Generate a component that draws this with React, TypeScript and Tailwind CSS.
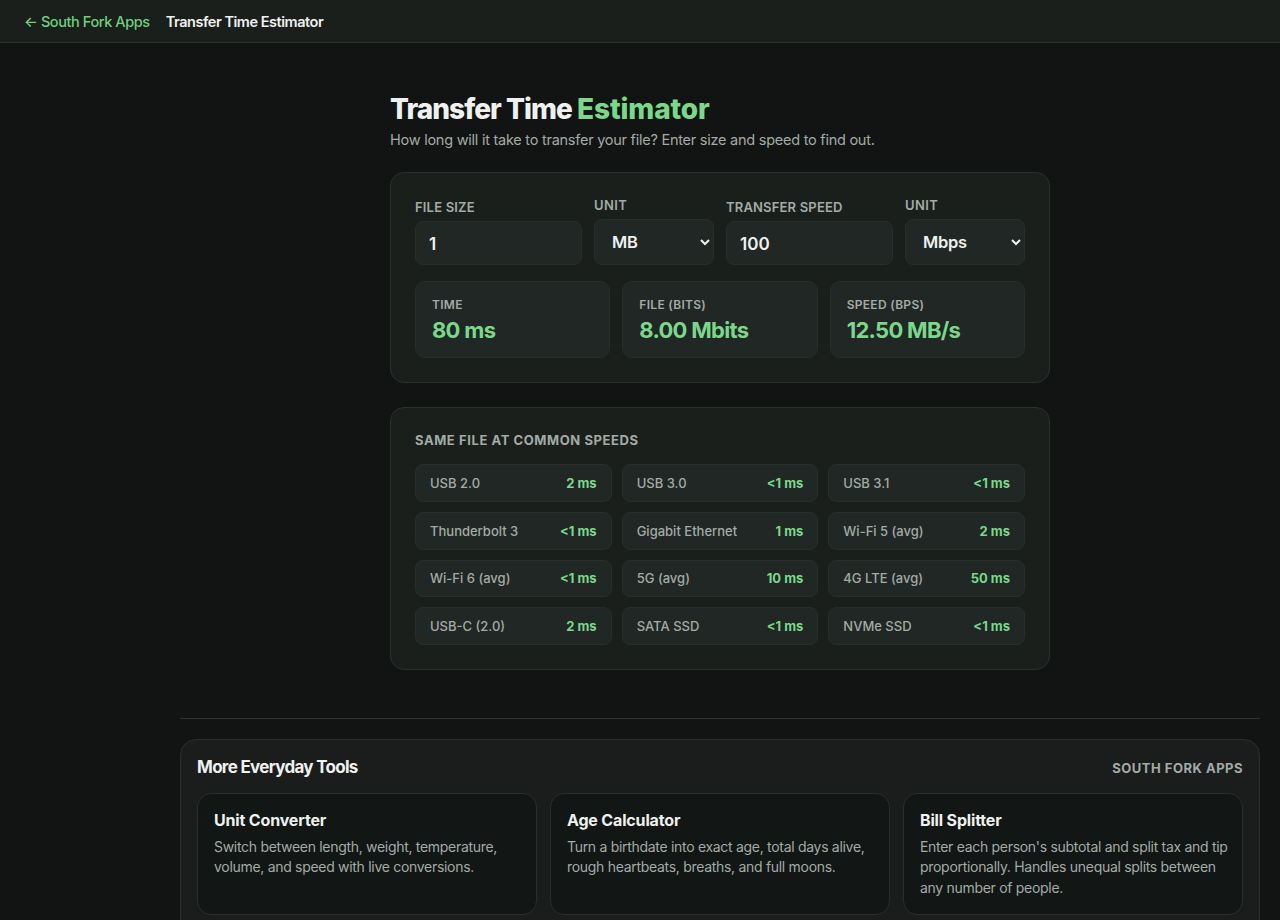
import React from "react";

const speeds = [
  ["USB 2.0", "2 ms"],
  ["USB 3.0", "<1 ms"],
  ["USB 3.1", "<1 ms"],
  ["Thunderbolt 3", "<1 ms"],
  ["Gigabit Ethernet", "1 ms"],
  ["Wi-Fi 5 (avg)", "2 ms"],
  ["Wi-Fi 6 (avg)", "<1 ms"],
  ["5G (avg)", "10 ms"],
  ["4G LTE (avg)", "50 ms"],
  ["USB-C (2.0)", "2 ms"],
  ["SATA SSD", "<1 ms"],
  ["NVMe SSD", "<1 ms"],
];

const results = [
  ["TIME", "80 ms"],
  ["FILE (BITS)", "8.00 Mbits"],
  ["SPEED (BPS)", "12.50 MB/s"],
];

const tools = [
  ["Unit Converter", "Switch between length, weight, temperature, volume, and speed with live conversions."],
  ["Age Calculator", "Turn a birthdate into exact age, total days alive, rough heartbeats, breaths, and full moons."],
  ["Bill Splitter", "Enter each person's subtotal and split tax and tip proportionally. Handles unequal splits between any number of people."],
];

const Field = ({ label, value, width }: { label: string; value: string; width: string }) => (
  <div className={width}>
    <label className="mb-1.5 block text-[13px] font-semibold leading-4 tracking-[0.18px] text-[#a3aba6]">{label}</label>
    <input
      readOnly
      value={value}
      className="block h-11 w-full rounded-lg border border-[#282e2a] bg-[#212724] pl-[13px] pr-3.5 pt-px text-[17px] font-semibold text-[#eef1ef] outline-none"
    />
  </div>
);

const UnitSelect = ({ value, options }: { value: string; options: string[] }) => (
  <div className="w-[120px]">
    <label className="mb-1.5 block text-[13px] font-semibold leading-4 tracking-[0.4px] text-[#a3aba6]">UNIT</label>
    <select
      defaultValue={value}
      className="block h-[46px] w-full rounded-lg border border-[#282e2a] bg-[#212724] pl-[13px] pr-3.5 text-[16.5px] font-semibold tracking-[-0.3px] text-[#eef1ef] outline-none [color-scheme:dark]"
    >
      {options.map((o) => (
        <option key={o}>{o}</option>
      ))}
    </select>
  </div>
);

export default function App() {
  return (
    <div className="min-h-screen bg-[#111412] font-['Inter',sans-serif] text-[#eef1ef]">
      <header className="flex h-[43px] items-center gap-4 border-b border-[#2a332d] bg-[#1a1f1c] px-6 pt-px">
        <a className="text-[14.5px] font-medium tracking-[-0.41px] text-[#6fcf7c]">← South Fork Apps</a>
        <span className="text-[14.5px] font-semibold tracking-[-0.46px] text-[#eef1ef]">Transfer Time Estimator</span>
      </header>

      <div className="ml-[180px] mr-5">
        <main className="mx-auto w-[660px] pt-12">
          <h1 className="text-[28px] font-extrabold leading-9 tracking-[-0.95px]">
            Transfer Time <span className="tracking-[-0.12px] text-[#7bd88a]">Estimator</span>
          </h1>
          <p className="mt-[2px] text-[14.5px] leading-[22px] tracking-[-0.25px] text-[#a3aba6]">
            How long will it take to transfer your file? Enter size and speed to find out.
          </p>

          <section className="mt-[21px] rounded-[14px] border border-[#2a312d] bg-[#1a1f1c] p-6">
            <div className="flex items-end gap-3">
              <Field label="FILE SIZE" value="1" width="w-[167px]" />
              <UnitSelect value="MB" options={["KB", "MB", "GB", "TB"]} />
              <Field label="TRANSFER SPEED" value="100" width="w-[167px]" />
              <UnitSelect value="Mbps" options={["Kbps", "Mbps", "Gbps"]} />
            </div>
            <div className="mt-4 grid grid-cols-3 gap-3">
              {results.map(([label, value]) => (
                <div key={label} className="h-[77px] rounded-[10px] border border-[#282e2a] bg-[#212724] px-4 pt-[15px]">
                  <div className="text-xs font-semibold leading-4 tracking-[0.3px] text-[#a3aba6]">{label}</div>
                  <div className="mt-[3px] text-[22px] font-bold leading-7 tracking-[-0.7px] text-[#7bd88a]">{value}</div>
                </div>
              ))}
            </div>
          </section>

          <section className="mt-6 rounded-[14px] border border-[#2a312d] bg-[#1a1f1c] px-6 pb-[23.67px] pt-6">
            <h2 className="text-[13px] font-bold leading-4 tracking-[0.58px] text-[#a3aba6]">SAME FILE AT COMMON SPEEDS</h2>
            <div className="mt-[16.33px] grid grid-cols-3 gap-2.5">
              {speeds.map(([name, time]) => (
                <div
                  key={name}
                  className="flex h-[37.67px] items-center justify-between rounded-lg border border-[#282e2a] bg-[#212724] px-[14px] pt-px"
                >
                  <span className="text-[13px] font-medium text-[#a3aba6]">{name}</span>
                  <span className="text-[13px] font-bold text-[#7bd88a]">{time}</span>
                </div>
              ))}
            </div>
          </section>
        </main>

        <hr className="mt-12 border-[#2a332d]" />

        <section className="mt-5 rounded-2xl border border-[#2a2f2c] bg-[#1a1d1b] p-4 pb-6">
          <div className="flex h-[37px] items-start justify-between">
            <h2 className="text-[17px] font-bold leading-[22px] tracking-[-0.7px]">More Everyday Tools</h2>
            <span className="pt-px text-[13px] font-bold leading-[22px] tracking-[0.5px] text-[#a3aba6]">SOUTH FORK APPS</span>
          </div>
          <div className="grid grid-cols-3 gap-[13px]">
            {tools.map(([name, text]) => (
              <div key={name} className="h-[122px] rounded-[14px] border border-[#2a2f2c] bg-[#121614] pl-4 pr-2 pt-[15px]">
                <h3 className="text-base font-bold leading-[22px] tracking-[-0.01em]">{name}</h3>
                <p className="mt-[6px] text-sm leading-[20.5px] tracking-[-0.3px] text-[#a3aba6]">{text}</p>
              </div>
            ))}
          </div>
        </section>
      </div>
    </div>
  );
}
